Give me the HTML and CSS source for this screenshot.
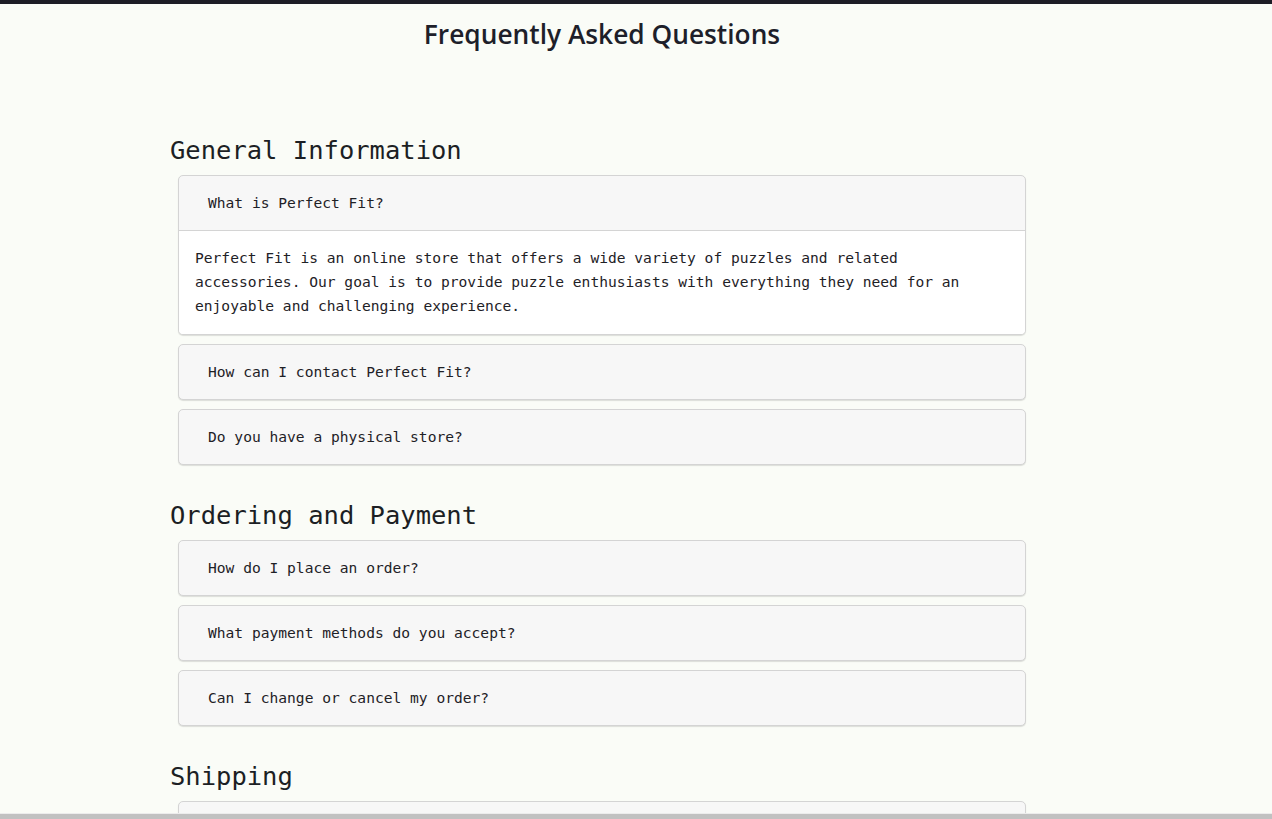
FILE: index.html
```html
<!DOCTYPE html>
<html lang="en">
<head>
<meta charset="utf-8">
<title>FAQ - Perfect Fit</title>
<link rel="stylesheet" href="styles.css">
</head>
<body>
<div class="topbar"></div>
<main class="faq">
  <h1 class="page-title">Frequently Asked Questions</h1>

  <section class="faq-section">
    <h2 class="section-title">General Information</h2>
    <div class="item open">
      <div class="question">What is Perfect Fit?</div>
      <div class="answer">Perfect Fit is an online store that offers a wide variety of puzzles and related accessories. Our goal is to provide puzzle enthusiasts with everything they need for an enjoyable and challenging experience.</div>
    </div>
    <div class="item">
      <div class="question">How can I contact Perfect Fit?</div>
    </div>
    <div class="item">
      <div class="question">Do you have a physical store?</div>
    </div>
  </section>

  <section class="faq-section">
    <h2 class="section-title">Ordering and Payment</h2>
    <div class="item">
      <div class="question">How do I place an order?</div>
    </div>
    <div class="item">
      <div class="question">What payment methods do you accept?</div>
    </div>
    <div class="item">
      <div class="question">Can I change or cancel my order?</div>
    </div>
  </section>

  <section class="faq-section">
    <h2 class="section-title">Shipping</h2>
    <div class="item">
      <div class="question">How long does shipping take?</div>
    </div>
  </section>
</main>
<div class="hscroll"></div>
</body>
</html>
```

FILE: styles.css
```css
html, body {
  margin: 0;
  padding: 0;
}
body {
  background: #fafcf7;
  color: #212529;
  font-family: "DejaVu Sans Mono", "Liberation Mono", monospace;
}
.topbar {
  height: 4px;
  background: #1d1d26;
}
.faq {
  width: 864px;
  margin-left: 170px;
}
.page-title {
  font-family: "Open Sans", "Noto Sans", sans-serif;
  font-weight: 600;
  font-size: 26.3px;
  line-height: 36px;
  color: #1e1f2a;
  text-align: center;
  margin: 12px 0 0 0;
}
.faq-section {
  display: flex;
  flex-direction: column;
}
.section-title {
  font-family: "DejaVu Sans Mono", "Liberation Mono", monospace;
  font-weight: normal;
  font-size: 25.5px;
  line-height: 34px;
  margin: 24px 0 8px 0;
  color: #1c1f24;
}
.faq-section:first-of-type .section-title {
  margin-top: 81px;
}
.item {
  margin: 0 8px 9px 8px;
  border: 1px solid #d4d4d4;
  border-radius: 5px;
  background: #f7f7f7;
  box-shadow: 0 1px 1px rgba(0, 0, 0, 0.12);
  overflow: hidden;
}
.question {
  height: 54px;
  display: flex;
  align-items: center;
  padding-left: 29px;
  font-size: 14.6px;
  color: #1e2126;
  padding-bottom: 2px;
  box-sizing: border-box;
}
.item.open .question {
  border-bottom: 1px solid #d4d4d4;
  height: 55px;
}
.answer {
  background: #ffffff;
  padding: 15px 16px 16px 16px;
  font-size: 14.6px;
  line-height: 24px;
  color: #1e2126;
}
.hscroll {
  position: fixed;
  left: 0;
  right: 0;
  bottom: 0;
  height: 5px;
  background: #c1c1c1;
  border-top: 1px solid #ececec;
}
```
